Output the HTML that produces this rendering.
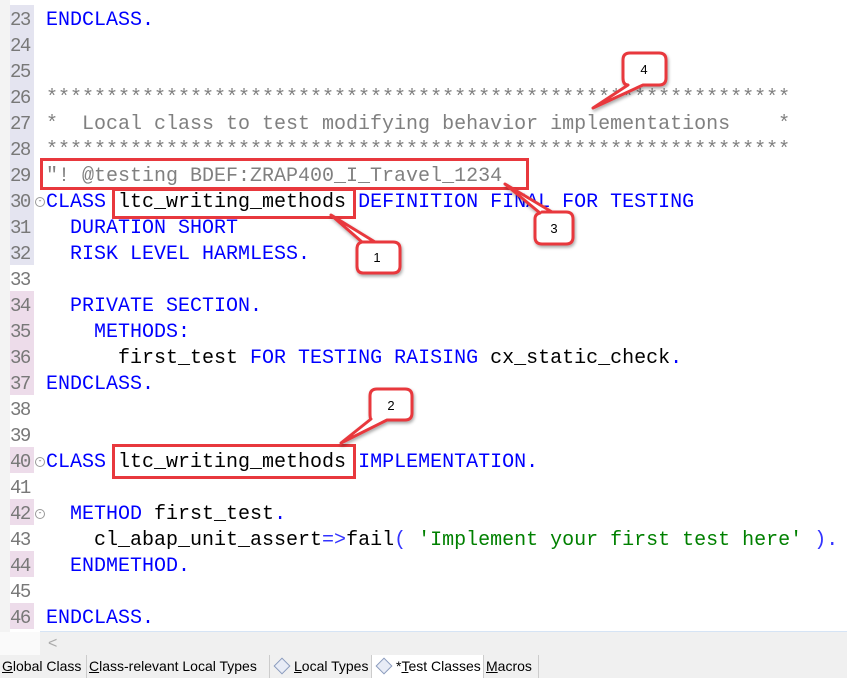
<!DOCTYPE html>
<html><head><style>
body{margin:0;width:847px;height:678px;overflow:hidden;background:#fff;position:relative;font-family:"Liberation Mono",monospace;}
.strip{position:absolute;left:0;top:0;width:10px;height:632px;background:#f3f3f3}
.ln{position:absolute;left:10px;width:24px;height:26px;line-height:26px;font-size:19px;color:#787878;letter-spacing:-1.5px;padding-top:2px;box-sizing:border-box}
.lav{background:#e4e4f0}.pink{background:#eddcea}
.code{position:absolute;left:46px;height:26px;line-height:26px;font-size:20px;white-space:pre;color:#000;margin-top:3px}
.k{color:#0000ff}.c{color:#808080}.s{color:#008000}.b{color:#3333ff}
.fold{position:absolute;left:35px;width:8px;height:8px;border:1px solid #999;border-radius:50%;font-size:8px;line-height:7px;text-align:center;color:#666}
.rbox{position:absolute;border:3px solid #e8383d;box-sizing:border-box}
.tabs{position:absolute;left:0;top:655px;width:847px;height:23px;background:#f0f0f0;font-family:"Liberation Sans",sans-serif;font-size:14px;}
.tab{position:absolute;top:0;height:23px;line-height:22px;border-right:1px solid #ccc;padding:0 2px;color:#000;white-space:nowrap;overflow:hidden;box-sizing:border-box}
.tab.act{background:#fff}
.dia{display:inline-block;width:10px;height:10px;border:1px solid #8a9bbd;background:#e8ecf6;transform:rotate(45deg);margin:0 6px 0 4px;vertical-align:-1px}
</style></head><body>
<div class="strip"></div>
<div class="ln lav" style="top:5px">23</div><div class="code k" style="top:5px">ENDCLASS.</div>
<div class="ln lav" style="top:31px">24</div>
<div class="ln lav" style="top:57px">25</div>
<div class="ln lav" style="top:83px">26</div><div class="code c" style="top:83px">**************************************************************</div>
<div class="ln lav" style="top:109px">27</div><div class="code c" style="top:109px">*  Local class to test modifying behavior implementations    *</div>
<div class="ln lav" style="top:135px">28</div><div class="code c" style="top:135px">**************************************************************</div>
<div class="ln lav" style="top:161px">29</div><div class="code c" style="top:161px">"! @testing BDEF:ZRAP400_I_Travel_1234</div>
<div class="ln lav" style="top:187px">30</div><div class="fold" style="top:197px">-</div><div class="code" style="top:187px"><span class="k">CLASS</span> ltc_writing_methods <span class="k">DEFINITION FINAL FOR TESTING</span></div>
<div class="ln lav" style="top:213px">31</div><div class="code k" style="top:213px">  DURATION SHORT</div>
<div class="ln lav" style="top:239px">32</div><div class="code k" style="top:239px">  RISK LEVEL HARMLESS.</div>
<div class="ln" style="top:265px">33</div>
<div class="ln pink" style="top:291px">34</div><div class="code k" style="top:291px">  PRIVATE SECTION.</div>
<div class="ln pink" style="top:317px">35</div><div class="code k" style="top:317px">    METHODS:</div>
<div class="ln pink" style="top:343px">36</div><div class="code" style="top:343px">      first_test <span class="k">FOR TESTING RAISING</span> cx_static_check<span class="k">.</span></div>
<div class="ln pink" style="top:369px">37</div><div class="code k" style="top:369px">ENDCLASS.</div>
<div class="ln" style="top:395px">38</div>
<div class="ln" style="top:421px">39</div>
<div class="ln pink" style="top:447px">40</div><div class="fold" style="top:457px">-</div><div class="code" style="top:447px"><span class="k">CLASS</span> ltc_writing_methods <span class="k">IMPLEMENTATION.</span></div>
<div class="ln" style="top:473px">41</div>
<div class="ln pink" style="top:499px">42</div><div class="fold" style="top:509px">-</div><div class="code" style="top:499px">  <span class="k">METHOD</span> first_test<span class="k">.</span></div>
<div class="ln" style="top:525px">43</div><div class="code" style="top:525px">    cl_abap_unit_assert<span class="b">=&gt;</span>fail<span class="b">(</span> <span class="s">'Implement your first test here'</span> <span class="b">).</span></div>
<div class="ln pink" style="top:551px">44</div><div class="code k" style="top:551px">  ENDMETHOD.</div>
<div class="ln" style="top:577px">45</div>
<div class="ln pink" style="top:603px">46</div><div class="code k" style="top:603px">ENDCLASS.</div>
<div style="position:absolute;left:40px;top:631px;width:807px;height:1px;background:#d6e4f5"></div>
<div style="position:absolute;left:0;top:632px;width:847px;height:23px;background:#f0f0f0"></div>
<div style="position:absolute;left:0;top:632px;width:40px;height:23px;background:#fafafa"></div>
<div style="position:absolute;left:48px;top:632px;font-family:'Liberation Sans',sans-serif;font-size:16px;color:#aaa;line-height:23px">&lt;</div>

<div class="rbox" style="left:40px;top:158px;width:489px;height:32px"></div>
<div class="rbox" style="left:112px;top:188px;width:244px;height:31px"></div>
<div class="rbox" style="left:112px;top:444px;width:244px;height:35px"></div>

<svg width="847" height="678" style="position:absolute;left:0;top:0" font-family="Liberation Sans,sans-serif" font-size="13">
<defs><filter id="sh"><feDropShadow dx="1" dy="2" stdDeviation="1.5" flood-opacity="0.35"/></filter></defs>
<g fill="#fff" stroke="#e8383d" stroke-width="3" filter="url(#sh)" stroke-linejoin="round">
<path d="M630,53 H659 Q666,53 666,60 V78 Q666,85 659,85 H643 L593,108 L628,85 Q623,85 623,78 V60 Q623,53 630,53 Z"/>
<path d="M542,212 H566 Q573,212 573,219 V237 Q573,244 566,244 H542 Q535,244 535,237 V219 Q535,214 540,213 L505,184 L552,212 Z"/>
<path d="M363,242 H393 Q400,242 400,249 V266 Q400,273 393,273 H363 Q357,273 357,266 V249 Q357,243 362,242 L331,215 L375,242 Z"/>
<path d="M377,389 H405 Q412,389 412,396 V413 Q412,420 405,420 H387 L341,443 L371,419 Q370,419 370,413 V396 Q370,389 377,389 Z"/>
</g>
<text x="644" y="74" text-anchor="middle" fill="#000">4</text>
<text x="554" y="233" text-anchor="middle" fill="#000">3</text>
<text x="377" y="262" text-anchor="middle" fill="#000">1</text>
<text x="391" y="410" text-anchor="middle" fill="#000">2</text>
</svg>

<div class="tabs">
<div class="tab" style="left:0;width:87px"><u>G</u>lobal Class</div>
<div class="tab" style="left:87px;width:183px"><u>C</u>lass-relevant Local Types</div>
<div class="tab" style="left:270px;width:102px"><span class="dia"></span><u>L</u>ocal Types</div>
<div class="tab act" style="left:372px;width:112px"><span class="dia"></span>*<u>T</u>est Classes</div>
<div class="tab" style="left:484px;width:55px"><u>M</u>acros</div>
</div>
</body></html>
